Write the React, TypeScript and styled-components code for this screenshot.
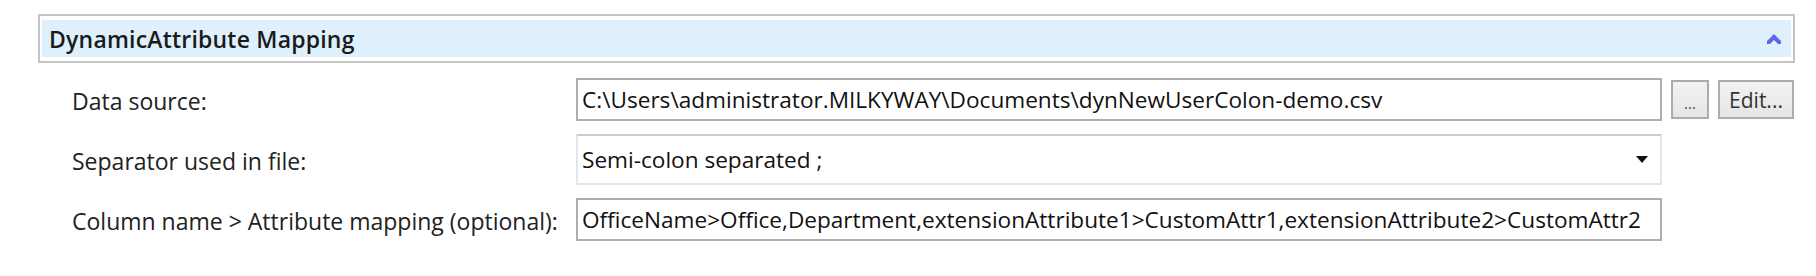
import React from "react";
import styled, { createGlobalStyle } from "styled-components";

const Global = createGlobalStyle`
  html, body { margin: 0; padding: 0; background: #ffffff; }
  body { font-family: "Open Sans", "Noto Sans", sans-serif; color: #1e1e1e; }
`;

const Page = styled.div`
  width: 1816px;
  height: 276px;
  padding: 14px 0 0 38px;
  box-sizing: border-box;
  background: #ffffff;
`;

const Section = styled.section`
  width: 1757px;
  display: flex;
  flex-direction: column;
`;

const Header = styled.div`
  height: 49px;
  box-sizing: border-box;
  border: 2px solid #c4c4c4;
  padding: 4px 2px 4px 2px;
  background: #ffffff;
`;

const HeaderFill = styled.div`
  height: 100%;
  background: #dff0fd;
  display: flex;
  align-items: center;
  justify-content: space-between;
  padding: 1px 10px 0 7px;
  box-sizing: border-box;
  font-size: 23px;
  font-weight: 600;
  color: #1a1a1a;
  letter-spacing: 0.2px;
`;

const Body = styled.div`
  display: grid;
  grid-template-columns: 504px 1086px 1fr;
  row-gap: 13px;
  padding: 15px 0 0 34px;
  align-items: center;
`;

const Label = styled.div`
  font-size: 23px;
  color: #222222;
  white-space: nowrap;
  padding-top: 2px;
`;

const Field = styled.div<{ $h: number; $light?: boolean }>`
  height: ${(p) => p.$h}px;
  box-sizing: border-box;
  border: 2px solid ${(p) => (p.$light ? "#e2e6eb" : "#adadad")};
  border-top-color: ${(p) => (p.$light ? "#c9cbcf" : "#adadad")};
  display: flex;
  align-items: center;
  justify-content: space-between;
  padding: 0 12px 0 4px;
  font-size: 22.6px;
  color: #111111;
  white-space: nowrap;
  overflow: hidden;
  background: #ffffff;
`;

const Buttons = styled.div`
  display: flex;
  gap: 9px;
  padding-left: 9px;
`;

const Button = styled.div<{ $w: number }>`
  width: ${(p) => p.$w}px;
  height: 39px;
  box-sizing: border-box;
  border: 2px solid #acacac;
  background: linear-gradient(#f2f2f2, #e5e5e5);
  display: flex;
  align-items: center;
  justify-content: center;
  font-size: 21px;
  color: #333333;
`;

const Dots = styled.span`
  font-size: 15px;
  color: #444;
  letter-spacing: 0;
  padding-top: 6px;
`;

const Chevron = () => (
  <svg width="14" height="10" viewBox="0 0 14 10">
    <polygon points="0,7 7,0 14,7 14,10 11,10 7,6 3,10 0,10" fill="#5f67f0" />
  </svg>
);

const Caret = () => (
  <svg width="12" height="7" viewBox="0 0 12 7">
    <polygon points="0,0 12,0 6,7" fill="#111111" />
  </svg>
);

export default function App() {
  return (
    <>
      <Global />
      <Page>
        <Section>
          <Header>
            <HeaderFill>
              <span>DynamicAttribute Mapping</span>
              <Chevron />
            </HeaderFill>
          </Header>
          <Body>
            <Label>Data source:</Label>
            <Field $h={43}>C:\Users\administrator.MILKYWAY\Documents\dynNewUserColon-demo.csv</Field>
            <Buttons>
              <Button $w={38}><Dots>...</Dots></Button>
              <Button $w={76}>Edit...</Button>
            </Buttons>

            <Label>Separator used in file:</Label>
            <Field $h={51} $light>
              <span>Semi-colon separated ;</span>
              <Caret />
            </Field>
            <div />

            <Label>Column name &gt; Attribute mapping (optional):</Label>
            <Field $h={43}>OfficeName&gt;Office,Department,extensionAttribute1&gt;CustomAttr1,extensionAttribute2&gt;CustomAttr2</Field>
            <div />
          </Body>
        </Section>
      </Page>
    </>
  );
}
